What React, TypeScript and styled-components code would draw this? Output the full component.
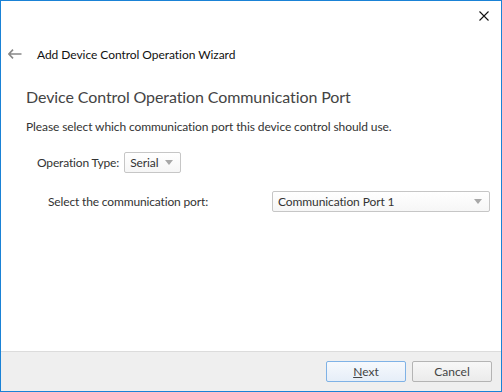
import styled, { createGlobalStyle } from "styled-components";

const Global = createGlobalStyle`
  html, body {
    margin: 0;
    padding: 0;
    background: #ffffff;
  }
  * {
    box-sizing: border-box;
  }
`;

export default function App() {
  return (
    <>
      <Global />
      <Window>
        <TitleBar>
          <CloseButton aria-label="Close">
            <svg width="10" height="10" viewBox="0 0 10 10">
              <path d="M0.5 0.5 L9.5 9.5 M9.5 0.5 L0.5 9.5" stroke="#111" strokeWidth="1.1" fill="none" />
            </svg>
          </CloseButton>
        </TitleBar>

        <Header>
          <BackButton aria-label="Back">
            <svg width="14" height="10" viewBox="0 0 14 10">
              <path d="M5 0.6 L0.9 5 L5 9.4 M0.9 5 L13.5 5" stroke="#888" strokeWidth="1.6" fill="none" />
            </svg>
          </BackButton>
          <WizardTitle>Add Device Control Operation Wizard</WizardTitle>
        </Header>

        <Body>
          <Heading>Device Control Operation Communication Port</Heading>
          <Description>Please select which communication port this device control should use.</Description>

          <TypeRow>
            <Label>Operation Type:</Label>
            <Select $width={57}>
              <span>Serial</span>
              <Caret />
            </Select>
          </TypeRow>

          <PortRow>
            <Label>Select the communication port:</Label>
            <Select $width={218}>
              <span>Communication Port 1</span>
              <Caret />
            </Select>
          </PortRow>
        </Body>

        <Footer>
          <Button $primary>
            <u>N</u>ext
          </Button>
          <Button>Cancel</Button>
        </Footer>
      </Window>
    </>
  );
}

const Window = styled.div`
  display: flex;
  flex-direction: column;
  width: 502px;
  height: 392px;
  border: 1px solid #1a82d6;
  background: #ffffff;
  font-family: Lato, "Liberation Sans", sans-serif;
  color: #222;
`;

const TitleBar = styled.div`
  display: flex;
  justify-content: flex-end;
  height: 30px;
`;

const CloseButton = styled.div`
  display: flex;
  align-items: center;
  justify-content: center;
  width: 46px;
  height: 29px;
  margin-right: -6px;
`;

const Header = styled.div`
  display: flex;
  align-items: center;
  height: 20px;
  margin-top: 13px;
  padding-left: 7px;
`;

const BackButton = styled.div`
  display: flex;
  align-items: center;
  width: 29px;
`;

const WizardTitle = styled.div`
  font-size: 12px;
  letter-spacing: -0.05px;
  color: #111;
`;

const Body = styled.div`
  flex: 1;
  padding: 0 25px;
`;

const Heading = styled.div`
  margin-top: 22px;
  font-size: 16px;
  letter-spacing: -0.1px;
  line-height: 22px;
  color: #444;
`;

const Description = styled.div`
  margin-top: 11px;
  font-size: 12px;
  letter-spacing: -0.1px;
  line-height: 16px;
  color: #333;
`;

const TypeRow = styled.div`
  display: flex;
  align-items: center;
  gap: 5px;
  margin-top: 17px;
  padding-left: 11px;
`;

const PortRow = styled.div`
  display: flex;
  align-items: center;
  justify-content: space-between;
  margin-top: 18px;
  padding-left: 22px;
  margin-right: -14px;
`;

const Label = styled.div`
  font-size: 12px;
  letter-spacing: -0.15px;
  color: #333;
`;

const Select = styled.div<{ $width: number }>`
  display: flex;
  align-items: center;
  justify-content: space-between;
  width: ${({ $width }) => $width}px;
  height: 21px;
  padding: 0 7px 0 5px;
  border: 1px solid #c6c6c6;
  border-radius: 2px;
  background: linear-gradient(#ffffff, #f6f6f6);
  font-size: 12px;
  letter-spacing: -0.1px;
  color: #333;
`;

const Caret = styled.span`
  width: 0;
  height: 0;
  border-left: 4px solid transparent;
  border-right: 4px solid transparent;
  border-top: 5px solid #a8a8a8;
`;

const Footer = styled.div`
  display: flex;
  justify-content: flex-end;
  align-items: center;
  gap: 6px;
  height: 40px;
  padding-right: 9px;
  border-top: 1px solid #dcdcdc;
  background: #efefef;
`;

const Button = styled.div<{ $primary?: boolean }>`
  display: flex;
  align-items: center;
  justify-content: center;
  width: 80px;
  height: 21px;
  border: 1px solid ${({ $primary }) => ($primary ? "#7fb2e6" : "#b4b4b4")};
  border-radius: 2px;
  background: ${({ $primary }) =>
    $primary ? "linear-gradient(#f6f9fd, #e6eef8)" : "linear-gradient(#f7f7f7, #ebebeb)"};
  font-size: 12px;
  color: #444;

  u {
    text-decoration-thickness: 1px;
  }
`;
